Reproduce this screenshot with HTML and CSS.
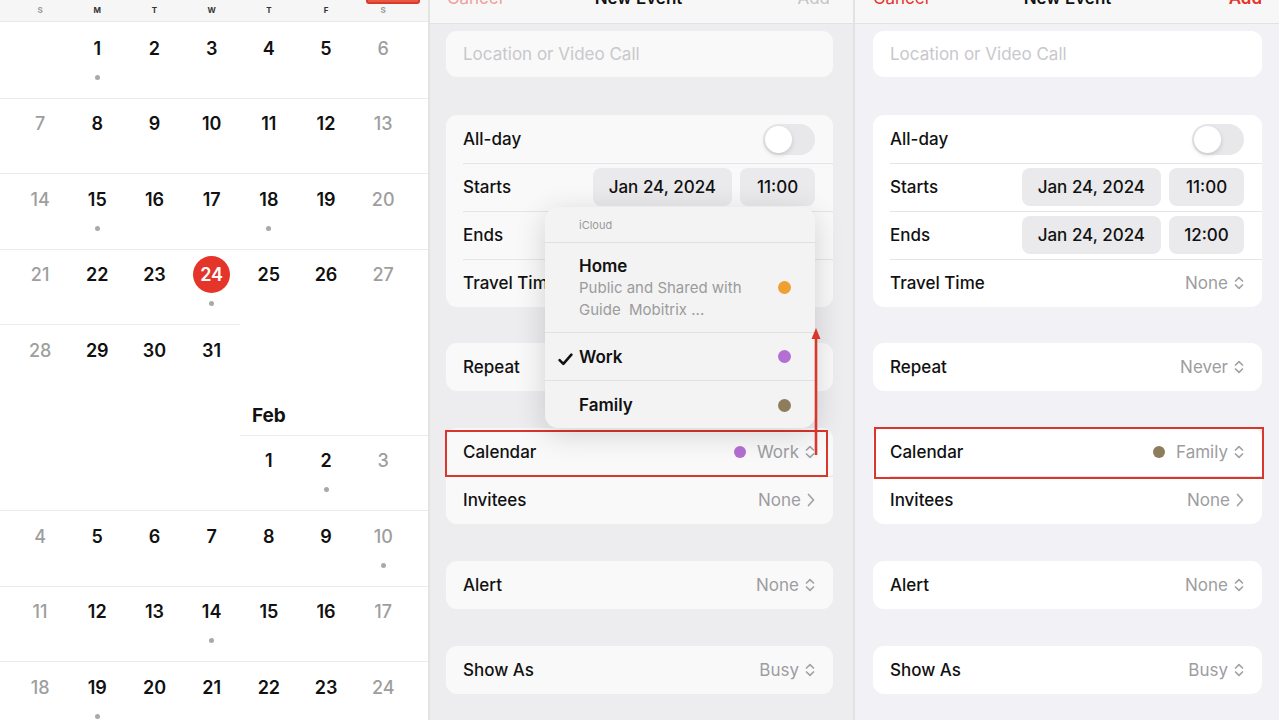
FILE: index.html
```html
<!DOCTYPE html>
<html lang="en">
<head>
<meta charset="utf-8">
<title>Calendar – New Event</title>
<link rel="stylesheet" href="styles.css">
</head>
<body>
<div class="screen">

  <section class="cal">
    <div class="annot-top"></div>
    <div class="cal-head">
      <span class="wl we">S</span><span class="wl">M</span><span class="wl">T</span><span class="wl">W</span><span class="wl">T</span><span class="wl">F</span><span class="wl we">S</span>
    </div>

    <div class="week">
      <div class="days">
        <div class="day we"></div>
        <div class="day"><span class="num">1</span><span class="dot"></span></div>
        <div class="day"><span class="num">2</span></div>
        <div class="day"><span class="num">3</span></div>
        <div class="day"><span class="num">4</span></div>
        <div class="day"><span class="num">5</span></div>
        <div class="day we"><span class="num">6</span></div>
      </div>
    </div>
    <div class="week">
      <div class="line"></div>
      <div class="days">
        <div class="day we"><span class="num">7</span></div>
        <div class="day"><span class="num">8</span></div>
        <div class="day"><span class="num">9</span></div>
        <div class="day"><span class="num">10</span></div>
        <div class="day"><span class="num">11</span></div>
        <div class="day"><span class="num">12</span></div>
        <div class="day we"><span class="num">13</span></div>
      </div>
    </div>
    <div class="week">
      <div class="line"></div>
      <div class="days">
        <div class="day we"><span class="num">14</span></div>
        <div class="day"><span class="num">15</span><span class="dot"></span></div>
        <div class="day"><span class="num">16</span></div>
        <div class="day"><span class="num">17</span></div>
        <div class="day"><span class="num">18</span><span class="dot"></span></div>
        <div class="day"><span class="num">19</span></div>
        <div class="day we"><span class="num">20</span></div>
      </div>
    </div>
    <div class="week">
      <div class="line"></div>
      <div class="days">
        <div class="day we"><span class="num">21</span></div>
        <div class="day"><span class="num">22</span></div>
        <div class="day"><span class="num">23</span></div>
        <div class="day today"><span class="num">24</span><span class="dot"></span></div>
        <div class="day"><span class="num">25</span></div>
        <div class="day"><span class="num">26</span></div>
        <div class="day we"><span class="num">27</span></div>
      </div>
    </div>
    <div class="week">
      <div class="line line-left"></div>
      <div class="days">
        <div class="day we"><span class="num">28</span></div>
        <div class="day"><span class="num">29</span></div>
        <div class="day"><span class="num">30</span></div>
        <div class="day"><span class="num">31</span></div>
      </div>
    </div>

    <div class="month-row">
      <span class="month">Feb</span>
    </div>

    <div class="week">
      <div class="line line-right"></div>
      <div class="days">
        <div class="day we"></div>
        <div class="day"></div>
        <div class="day"></div>
        <div class="day"></div>
        <div class="day"><span class="num">1</span></div>
        <div class="day"><span class="num">2</span><span class="dot"></span></div>
        <div class="day we"><span class="num">3</span></div>
      </div>
    </div>
    <div class="week">
      <div class="line"></div>
      <div class="days">
        <div class="day we"><span class="num">4</span></div>
        <div class="day"><span class="num">5</span></div>
        <div class="day"><span class="num">6</span></div>
        <div class="day"><span class="num">7</span></div>
        <div class="day"><span class="num">8</span></div>
        <div class="day"><span class="num">9</span></div>
        <div class="day we"><span class="num">10</span><span class="dot"></span></div>
      </div>
    </div>
    <div class="week">
      <div class="line"></div>
      <div class="days">
        <div class="day we"><span class="num">11</span></div>
        <div class="day"><span class="num">12</span></div>
        <div class="day"><span class="num">13</span></div>
        <div class="day"><span class="num">14</span><span class="dot"></span></div>
        <div class="day"><span class="num">15</span></div>
        <div class="day"><span class="num">16</span></div>
        <div class="day we"><span class="num">17</span></div>
      </div>
    </div>
    <div class="week">
      <div class="line"></div>
      <div class="days">
        <div class="day we"><span class="num">18</span></div>
        <div class="day"><span class="num">19</span><span class="dot"></span></div>
        <div class="day"><span class="num">20</span></div>
        <div class="day"><span class="num">21</span></div>
        <div class="day"><span class="num">22</span></div>
        <div class="day"><span class="num">23</span></div>
        <div class="day we"><span class="num">24</span></div>
      </div>
    </div>
  </section>

  <!-- Middle: New Event with calendar menu open -->
  <section class="form form-mid">
    <div class="nav">
      <div class="nav-inner">
        <span class="cancel">Cancel</span>
        <span class="title">New Event</span>
        <span class="add">Add</span>
      </div>
    </div>
    <div class="body">
      <div class="card card-loc">
        <div class="row"><span class="ph">Location or Video Call</span></div>
      </div>
      <div class="card card-time">
        <div class="row"><span class="lbl">All-day</span><span class="toggle"><span class="knob"></span></span></div>
        <div class="row"><span class="lbl">Starts</span><div class="pills"><span class="pill">Jan 24, 2024</span><span class="pill time">11:00</span></div></div>
        <div class="row"><span class="lbl">Ends</span><div class="pills"><span class="pill">Jan 24, 2024</span><span class="pill time">12:00</span></div></div>
        <div class="row"><span class="lbl">Travel Time</span><span class="val">None <svg class="ud" viewBox="0 0 10 14"><path d="M1.5 5 L5 1.6 L8.5 5 M1.5 9 L5 12.4 L8.5 9"/></svg></span></div>
      </div>
      <div class="card">
        <div class="row"><span class="lbl">Repeat</span><span class="val">Never <svg class="ud" viewBox="0 0 10 14"><path d="M1.5 5 L5 1.6 L8.5 5 M1.5 9 L5 12.4 L8.5 9"/></svg></span></div>
      </div>
      <div class="card">
        <div class="hl hl-mid"></div>
        <div class="row"><span class="lbl">Calendar</span><span class="val"><span class="cdot work"></span>Work <svg class="ud" viewBox="0 0 10 14"><path d="M1.5 5 L5 1.6 L8.5 5 M1.5 9 L5 12.4 L8.5 9"/></svg></span></div>
        <div class="row"><span class="lbl">Invitees</span><span class="val">None <svg class="chev" viewBox="0 0 8 14"><path d="M1.5 1.5 L6.5 7 L1.5 12.5"/></svg></span></div>
      </div>
      <div class="card">
        <div class="row"><span class="lbl">Alert</span><span class="val">None <svg class="ud" viewBox="0 0 10 14"><path d="M1.5 5 L5 1.6 L8.5 5 M1.5 9 L5 12.4 L8.5 9"/></svg></span></div>
      </div>
      <div class="card">
        <div class="row"><span class="lbl">Show As</span><span class="val">Busy <svg class="ud" viewBox="0 0 10 14"><path d="M1.5 5 L5 1.6 L8.5 5 M1.5 9 L5 12.4 L8.5 9"/></svg></span></div>
      </div>
    </div>

    <div class="menu">
      <div class="menu-head">iCloud</div>
      <div class="menu-item menu-home">
        <div class="mi-text">
          <span class="mi-title">Home</span>
          <span class="mi-sub">Public and Shared with Guide&nbsp; Mobitrix ...</span>
        </div>
        <span class="cdot home"></span>
      </div>
      <div class="menu-item">
        <span class="check"><svg viewBox="0 0 14 12"><path d="M1.5 6.5 L5 10 L12.5 1.5"/></svg></span>
        <span class="mi-title">Work</span>
        <span class="cdot work"></span>
      </div>
      <div class="menu-item">
        <span class="mi-title">Family</span>
        <span class="cdot family"></span>
      </div>
    </div>

    <svg class="arrow" viewBox="0 0 12 130"><path class="arrow-line" d="M6 8 V128"/><path class="arrow-head" d="M1.5 12 L6 1 L10.5 12 Z"/></svg>
  </section>

  <!-- Right: New Event with Family selected -->
  <section class="form form-right">
    <div class="nav">
      <div class="nav-inner">
        <span class="cancel">Cancel</span>
        <span class="title">New Event</span>
        <span class="add">Add</span>
      </div>
    </div>
    <div class="body">
      <div class="card card-loc">
        <div class="row"><span class="ph">Location or Video Call</span></div>
      </div>
      <div class="card card-time">
        <div class="row"><span class="lbl">All-day</span><span class="toggle"><span class="knob"></span></span></div>
        <div class="row"><span class="lbl">Starts</span><div class="pills"><span class="pill">Jan 24, 2024</span><span class="pill time">11:00</span></div></div>
        <div class="row"><span class="lbl">Ends</span><div class="pills"><span class="pill">Jan 24, 2024</span><span class="pill time">12:00</span></div></div>
        <div class="row"><span class="lbl">Travel Time</span><span class="val">None <svg class="ud" viewBox="0 0 10 14"><path d="M1.5 5 L5 1.6 L8.5 5 M1.5 9 L5 12.4 L8.5 9"/></svg></span></div>
      </div>
      <div class="card">
        <div class="row"><span class="lbl">Repeat</span><span class="val">Never <svg class="ud" viewBox="0 0 10 14"><path d="M1.5 5 L5 1.6 L8.5 5 M1.5 9 L5 12.4 L8.5 9"/></svg></span></div>
      </div>
      <div class="card">
        <div class="hl hl-right"></div>
        <div class="row"><span class="lbl">Calendar</span><span class="val"><span class="cdot family"></span>Family <svg class="ud" viewBox="0 0 10 14"><path d="M1.5 5 L5 1.6 L8.5 5 M1.5 9 L5 12.4 L8.5 9"/></svg></span></div>
        <div class="row"><span class="lbl">Invitees</span><span class="val">None <svg class="chev" viewBox="0 0 8 14"><path d="M1.5 1.5 L6.5 7 L1.5 12.5"/></svg></span></div>
      </div>
      <div class="card">
        <div class="row"><span class="lbl">Alert</span><span class="val">None <svg class="ud" viewBox="0 0 10 14"><path d="M1.5 5 L5 1.6 L8.5 5 M1.5 9 L5 12.4 L8.5 9"/></svg></span></div>
      </div>
      <div class="card">
        <div class="row"><span class="lbl">Show As</span><span class="val">Busy <svg class="ud" viewBox="0 0 10 14"><path d="M1.5 5 L5 1.6 L8.5 5 M1.5 9 L5 12.4 L8.5 9"/></svg></span></div>
      </div>
    </div>
  </section>

</div>
</body>
</html>
```

FILE: styles.css
```css
* { box-sizing: border-box; }

body {
  margin: 0;
  font-family: Inter, "Noto Sans", "Liberation Sans", sans-serif;
  color: #1c1c1e;
  background: #fff;
}

.screen {
  display: flex;
  width: 1279px;
  height: 720px;
  overflow: hidden;
}

/* ---------- Month calendar ---------- */
.cal {
  flex: none;
  width: 430px;
  height: 720px;
  border-right: 2px solid #e3e3e3;
  background: #fff;
  position: relative;
  overflow: hidden;
}

.annot-top {
  position: absolute;
  left: 366px;
  top: -30px;
  width: 54px;
  height: 34px;
  border: 2px solid #d83a2e;
  background: #e9583f;
  border-radius: 3px;
}

.cal-head {
  height: 22px;
  border-bottom: 1px solid #e8e8e8;
  background: #f6f6f6;
  display: grid;
  grid-template-columns: repeat(7, 57.2px);
  padding-left: 11.5px;
  align-items: center;
  padding-bottom: 2px;
}

.wl {
  text-align: center;
  font-size: 8px;
  font-weight: 700;
  color: #333;
}
.wl.we { color: #9a9a9a; }

.week { height: 75.5px; }

.line {
  height: 1px;
  margin-bottom: -1px;
  background: #ebebeb;
}
.line-left { width: 240px; }
.line-right { margin-left: 240px; }

.days {
  display: grid;
  grid-template-columns: repeat(7, 57.2px);
  padding-left: 11.5px;
}

.day {
  display: flex;
  flex-direction: column;
  align-items: center;
}

.num {
  width: 37px;
  height: 37px;
  margin-top: 7.5px;
  border-radius: 50%;
  display: flex;
  align-items: center;
  justify-content: center;
  font-size: 18px;
  font-weight: 600;
  color: #111;
}
.we .num { color: #9e9e9e; font-weight: 500; }
.today .num { background: #e5352b; color: #fff; }

.dot {
  width: 5px;
  height: 5px;
  border-radius: 50%;
  background: #a9a9a9;
  margin-top: 8px;
}

.month-row {
  height: 35px;
  display: grid;
  grid-template-columns: repeat(7, 57.2px);
  padding-left: 11.5px;
  align-items: center;
  padding-bottom: 4px;
}
.month {
  grid-column: 5;
  text-align: center;
  font-size: 19px;
  font-weight: 700;
  color: #111;
}

/* ---------- Event forms ---------- */
.form {
  flex: none;
  position: relative;
  height: 720px;
  overflow: hidden;
  background: #f2f2f6;
}
.form-mid {
  width: 425px;
  background: #ededef;
  border-right: 2px solid #e2e2e4;
}
.form-right { width: 424px; }

.nav {
  height: 24px;
  border-bottom: 1px solid #e2e2e2;
  background: #f7f7f7;
  overflow: hidden;
}
.nav-inner {
  margin-top: -13px;
  display: grid;
  grid-template-columns: 1fr auto 1fr;
  line-height: 22px;
  font-size: 17px;
}
.form-mid .nav-inner { padding: 0 23px 0 17px; }
.form-right .nav-inner { padding: 0 17px 0 18px; }

.cancel { color: #e5352b; }
.title { font-weight: 600; color: #111; }
.add { text-align: right; color: #e5352b; font-weight: 600; }
.form-mid .cancel { color: #ef9f9a; }
.form-mid .add { color: #c4c4c4; font-weight: 400; }

.body {
  display: flex;
  flex-direction: column;
  gap: 37px;
  padding-top: 7px;
}
.form-mid .body { padding-left: 16px; padding-right: 20px; }
.form-right .body { padding-left: 18px; padding-right: 17px; }

.card {
  background: #fff;
  border-radius: 11px;
  position: relative;
}
.form-mid .card { background: #f9f9f9; }
.card-loc { margin-bottom: 1px; }
.card-time { margin-bottom: -1px; }

.row {
  height: 48px;
  display: flex;
  align-items: center;
  justify-content: space-between;
  padding: 0 18px 0 17px;
  position: relative;
  font-size: 17px;
}
.card-loc .row { height: 46px; }
.row + .row::before {
  content: "";
  position: absolute;
  left: 17px;
  right: 0;
  top: 0;
  height: 1px;
  background: #e4e4e7;
}

.lbl { font-weight: 500; color: #111; white-space: nowrap; }
.ph { color: #c8c8cc; }

.toggle {
  width: 52px;
  height: 31px;
  border-radius: 16px;
  background: #e8e8ea;
  position: relative;
}
.knob {
  position: absolute;
  left: 2px;
  top: 2px;
  width: 27px;
  height: 27px;
  border-radius: 50%;
  background: #fff;
  box-shadow: 0 2px 5px rgba(0,0,0,0.15);
}

.pills { display: flex; gap: 8px; }
.pill {
  height: 38px;
  padding: 0 16px;
  border-radius: 8px;
  background: #eaeaec;
  display: flex;
  align-items: center;
  justify-content: center;
  font-size: 17px;
  font-weight: 500;
  color: #111;
}
.pill.time { width: 75px; padding: 0; }

.val {
  display: flex;
  align-items: center;
  gap: 6px;
  color: #9d9da1;
  font-size: 17px;
}
.ud, .chev {
  width: 10px;
  height: 14px;
  fill: none;
  stroke: #a3a3a7;
  stroke-width: 1.7;
  stroke-linecap: round;
  stroke-linejoin: round;
}
.chev { width: 8px; }

.cdot {
  width: 12px;
  height: 12px;
  border-radius: 50%;
  display: inline-block;
  margin-right: 5px;
}
.cdot.work { background: #b36fd3; }
.cdot.home { background: #efa033; }
.cdot.family { background: #8d7d5c; }

/* highlight boxes */
.hl {
  position: absolute;
  border: 2.5px solid #d9362c;
  z-index: 2;
  pointer-events: none;
}
.hl-mid { left: -1px; top: 2px; width: 383px; height: 47px; }
.hl-right { left: 1px; top: -1px; right: -2px; height: 52px; }

/* popup menu */
.menu {
  position: absolute;
  left: 115px;
  top: 207px;
  width: 270px;
  height: 221px;
  border-radius: 13px;
  background: #f3f3f4;
  box-shadow: 0 6px 30px rgba(0,0,0,0.16);
  overflow: hidden;
  z-index: 3;
}
.menu-head {
  height: 36px;
  padding-left: 34px;
  display: flex;
  align-items: center;
  font-size: 11px;
  color: #9a9a9a;
  border-bottom: 1px solid #e0e0e2;
}
.menu-item {
  height: 48px;
  display: flex;
  align-items: center;
  padding: 0 24px 0 34px;
  position: relative;
  border-bottom: 1px solid #e0e0e2;
}
.menu-item:last-child { border-bottom: none; }
.menu-item .cdot { margin: 0 0 0 auto; width: 13px; height: 13px; }
.menu-home {
  height: 90px;
  align-items: center;
}
.mi-text {
  display: flex;
  flex-direction: column;
  width: 190px;
}
.mi-title {
  font-size: 17px;
  font-weight: 600;
  line-height: 22px;
  color: #111;
}
.mi-sub {
  font-size: 15px;
  line-height: 22px;
  color: #9b9b9b;
}
.check {
  position: absolute;
  left: 13px;
  top: 17px;
  width: 15px;
  height: 13px;
}
.check svg {
  width: 15px;
  height: 13px;
  fill: none;
  stroke: #111;
  stroke-width: 2.4;
  stroke-linecap: round;
  stroke-linejoin: round;
}

.arrow {
  position: absolute;
  left: 380px;
  top: 327px;
  width: 12px;
  height: 130px;
  z-index: 4;
}
.arrow-line { stroke: #d9362c; stroke-width: 2.6; fill: none; }
.arrow-head { fill: #d9362c; }
```
